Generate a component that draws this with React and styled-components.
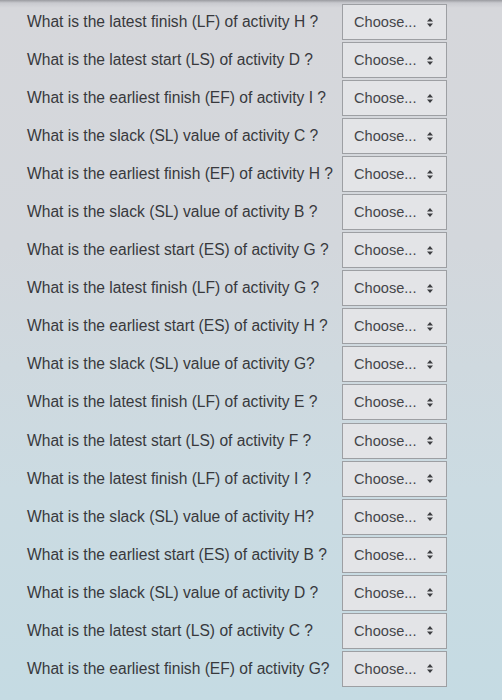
import React from "react";
import styled, { createGlobalStyle } from "styled-components";

const Global = createGlobalStyle`
  html, body { margin: 0; padding: 0; }
  body {
    width: 502px;
    height: 700px;
    overflow: hidden;
    background: linear-gradient(180deg, #9a9ba0 0px, #c9cacf 3px, #d6d7db 8px, #d3d7dc 35%, #cbdbe2 70%, #c5dbe3 100%);
    font-family: "Liberation Sans", Arial, sans-serif;
  }
`;

const Page = styled.div`
  padding: 3px 0 0 27px;
  display: flex;
  flex-direction: column;
`;

const Row = styled.div`
  display: grid;
  grid-template-columns: 315px 105px;
  align-items: center;
  height: 38.05px;
`;

const Label = styled.span`
  font-size: 15.6px;
  color: #38393d;
  white-space: nowrap;
`;

const Select = styled.div`
  box-sizing: border-box;
  height: 36px;
  border: 1px solid #9d9fa3;
  background: #e3e4e7;
  display: flex;
  align-items: center;
  justify-content: space-between;
  padding: 0 13px 0 11px;
  font-size: 14.6px;
  color: #45464a;
`;

const Arrows = () => (
  <svg width="6" height="9" viewBox="0 0 6 9">
    <path d="M3 0 L6 3.6 L0 3.6 Z M3 9 L6 5.4 L0 5.4 Z" fill="#3c3d41" />
  </svg>
);

const questions = [
  "What is the latest finish (LF) of activity H ?",
  "What is the latest start (LS) of activity D ?",
  "What is the earliest finish (EF) of activity I ?",
  "What is the slack (SL) value of activity C ?",
  "What is the earliest finish (EF) of activity H ?",
  "What is the slack (SL) value of activity B ?",
  "What is the earliest start (ES) of activity G ?",
  "What is the latest finish (LF) of activity G ?",
  "What is the earliest start (ES) of activity H ?",
  "What is the slack (SL) value of activity G?",
  "What is the latest finish (LF) of activity E ?",
  "What is the latest start (LS) of activity F ?",
  "What is the latest finish (LF) of activity I ?",
  "What is the slack (SL) value of activity H?",
  "What is the earliest start (ES) of activity B ?",
  "What is the slack (SL) value of activity D ?",
  "What is the latest start (LS) of activity C ?",
  "What is the earliest finish (EF) of activity G?",
];

export default function App() {
  return (
    <>
      <Global />
      <Page>
        {questions.map((q, i) => (
          <Row key={i}>
            <Label>{q}</Label>
            <Select>
              <span>Choose...</span>
              <Arrows />
            </Select>
          </Row>
        ))}
      </Page>
    </>
  );
}
